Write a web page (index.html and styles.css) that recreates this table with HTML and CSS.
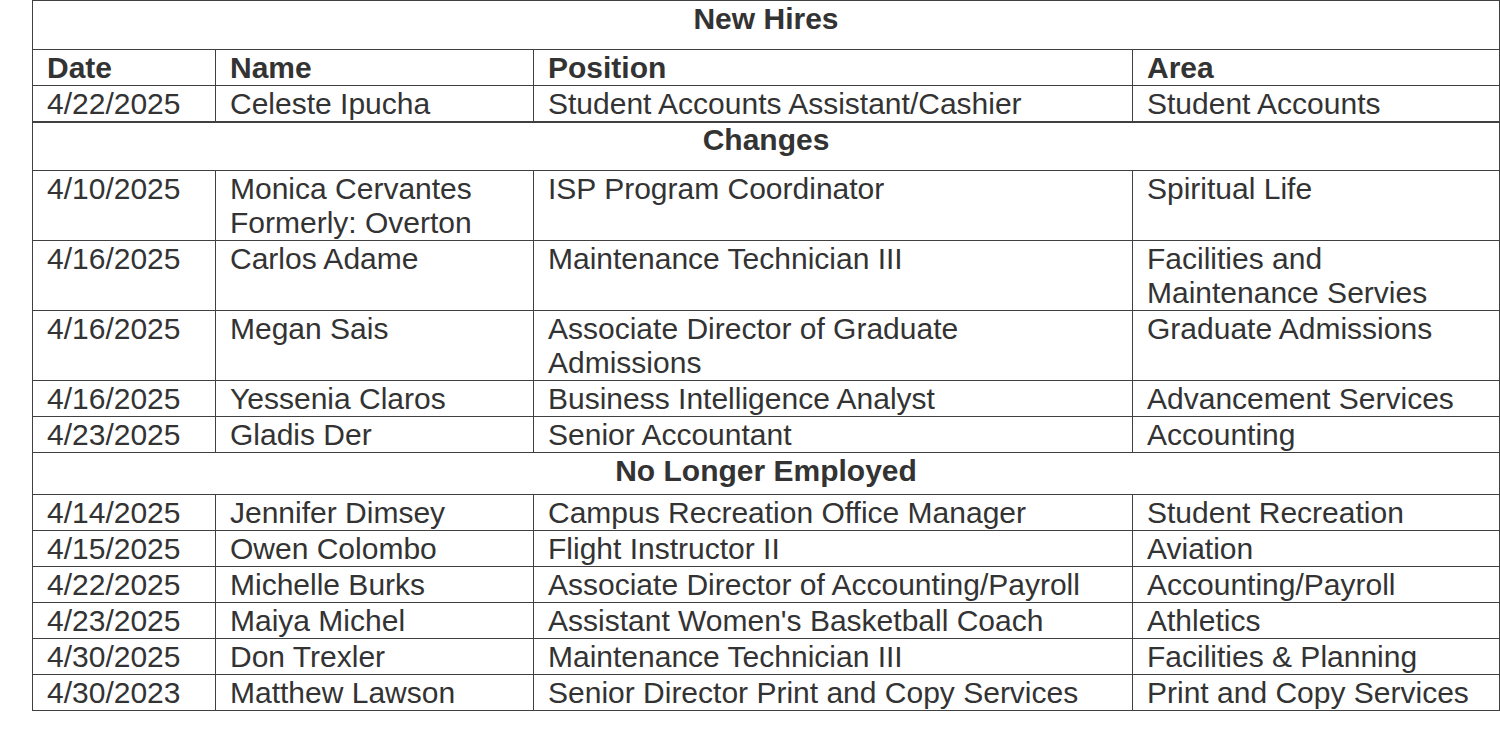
FILE: index.html
```html
<!DOCTYPE html>
<html>
<head>
<meta charset="utf-8">
<link rel="stylesheet" href="styles.css">
</head>
<body>
<div class="tbl">
  <div class="sec sec-tall">New Hires</div>
  <div class="c h">Date</div><div class="c h">Name</div><div class="c h">Position</div><div class="c h">Area</div>
  <div class="c thick">4/22/2025</div><div class="c thick">Celeste Ipucha</div><div class="c thick">Student Accounts Assistant/Cashier</div><div class="c thick">Student Accounts</div>

  <div class="sec sec-after-thick">Changes</div>
  <div class="c">4/10/2025</div><div class="c">Monica Cervantes<br>Formerly: Overton</div><div class="c">ISP Program Coordinator</div><div class="c">Spiritual Life</div>
  <div class="c">4/16/2025</div><div class="c">Carlos Adame</div><div class="c">Maintenance Technician III</div><div class="c">Facilities and<br>Maintenance Servies</div>
  <div class="c">4/16/2025</div><div class="c">Megan Sais</div><div class="c">Associate Director of Graduate<br>Admissions</div><div class="c">Graduate Admissions</div>
  <div class="c">4/16/2025</div><div class="c">Yessenia Claros</div><div class="c">Business Intelligence Analyst</div><div class="c">Advancement Services</div>
  <div class="c">4/23/2025</div><div class="c">Gladis Der</div><div class="c">Senior Accountant</div><div class="c">Accounting</div>

  <div class="sec sec-short">No Longer Employed</div>
  <div class="c">4/14/2025</div><div class="c">Jennifer Dimsey</div><div class="c">Campus Recreation Office Manager</div><div class="c">Student Recreation</div>
  <div class="c">4/15/2025</div><div class="c">Owen Colombo</div><div class="c">Flight Instructor II</div><div class="c">Aviation</div>
  <div class="c">4/22/2025</div><div class="c">Michelle Burks</div><div class="c">Associate Director of Accounting/Payroll</div><div class="c">Accounting/Payroll</div>
  <div class="c">4/23/2025</div><div class="c">Maiya Michel</div><div class="c">Assistant Women's Basketball Coach</div><div class="c">Athletics</div>
  <div class="c">4/30/2025</div><div class="c">Don Trexler</div><div class="c">Maintenance Technician III</div><div class="c">Facilities &amp; Planning</div>
  <div class="c">4/30/2023</div><div class="c">Matthew Lawson</div><div class="c">Senior Director Print and Copy Services</div><div class="c">Print and Copy Services</div>
</div>
</body>
</html>
```

FILE: styles.css
```css
html, body {
  margin: 0;
  padding: 0;
  background: #ffffff;
}
body {
  padding-left: 32px;
  font-family: "Liberation Sans", Arial, sans-serif;
  font-size: 30px;
  color: #333333;
}
.tbl {
  display: grid;
  grid-template-columns: 183px 318px 599px 367px;
  width: 1468px;
  box-sizing: border-box;
  border-left: 1px solid #404040;
  border-top: 1px solid #404040;
}
.c, .sec {
  box-sizing: border-box;
  border-right: 1px solid #404040;
  border-bottom: 1px solid #404040;
  line-height: 34px;
  padding: 1px 0 0 14px;
  white-space: nowrap;
}
.h {
  font-weight: bold;
}
.thick {
  border-bottom-width: 2px;
}
.sec {
  grid-column: 1 / -1;
  text-align: center;
  font-weight: bold;
  padding-left: 0;
}
.sec-tall {
  padding-bottom: 13px;
}
.sec-after-thick {
  padding-top: 0;
  padding-bottom: 13px;
}
.sec-short {
  padding-bottom: 6px;
}
```
